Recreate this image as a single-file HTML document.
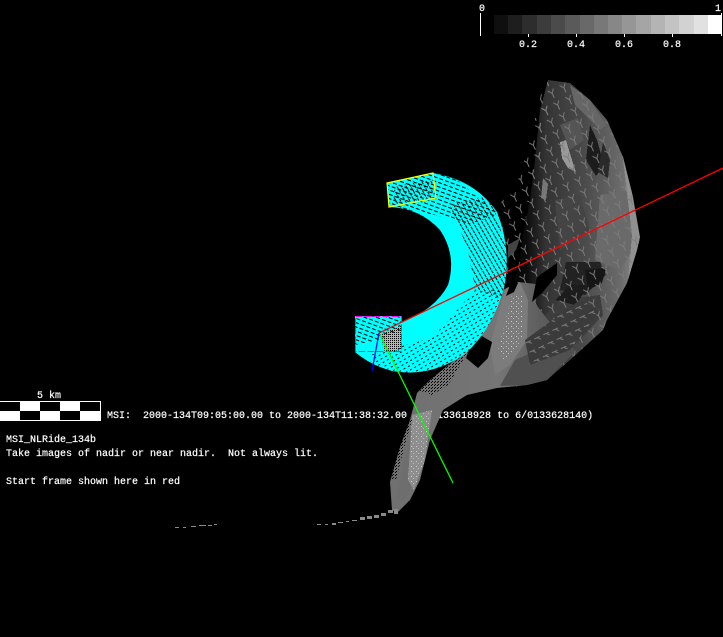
<!DOCTYPE html>
<html>
<head>
<meta charset="utf-8">
<style>
html,body{margin:0;padding:0;background:#000;width:723px;height:637px;overflow:hidden}
svg{position:absolute;left:0;top:0;display:block}
text{font-family:"Liberation Mono",monospace;font-size:10px;fill:#fff;stroke:#fff;stroke-width:.2}
</style>
</head>
<body>
<svg width="723" height="637" viewBox="0 0 723 637" xmlns="http://www.w3.org/2000/svg">
<defs>
<linearGradient id="body" gradientUnits="userSpaceOnUse" x1="505" y1="0" x2="640" y2="0">
<stop offset="0" stop-color="#000"/>
<stop offset=".16" stop-color="#0c0c0c"/>
<stop offset=".3" stop-color="#333"/>
<stop offset=".6" stop-color="#4c4c4c"/>
<stop offset=".85" stop-color="#6a6a6a"/>
<stop offset="1" stop-color="#8c8c8c"/>
</linearGradient>
<linearGradient id="low" gradientUnits="userSpaceOnUse" x1="400" y1="0" x2="600" y2="0">
<stop offset="0" stop-color="#707070"/>
<stop offset=".5" stop-color="#757575"/>
<stop offset=".72" stop-color="#5c5c5c"/>
<stop offset="1" stop-color="#444"/>
</linearGradient>
<pattern id="y" width="13" height="13" patternUnits="userSpaceOnUse" patternTransform="rotate(-25)">
<path d="M3 2l3 4 3-4M6 6v5" fill="none" stroke="#7c7c7c" stroke-width="1"/>
</pattern>
<pattern id="y2" width="10" height="10" patternUnits="userSpaceOnUse" patternTransform="rotate(-25)">
<path d="M1 3h6M4 3l3 3" fill="none" stroke="#7a7a7a" stroke-width="1"/>
</pattern>
<pattern id="dot" width="5" height="5" patternUnits="userSpaceOnUse">
<rect x="1" y="1" width="1" height="1" fill="#ccc"/><rect x="3" y="3" width="1" height="1" fill="#bbb"/>
</pattern>
<pattern id="dith" width="3" height="3" patternUnits="userSpaceOnUse">
<rect x="0" y="0" width="1" height="1" fill="#000"/><rect x="2" y="1" width="1" height="1" fill="#000"/>
</pattern>
<pattern id="c1" width="6" height="4" patternUnits="userSpaceOnUse" patternTransform="rotate(20)">
<rect x="0" y="1" width="4" height="1" fill="#000"/>
</pattern>
<pattern id="c2" width="4" height="4" patternUnits="userSpaceOnUse" patternTransform="rotate(60)">
<rect x="0" y="1" width="3" height="1" fill="#000"/>
</pattern>
<pattern id="c3" width="5" height="4" patternUnits="userSpaceOnUse" patternTransform="rotate(-30)">
<rect x="0" y="1" width="2" height="1" fill="#000"/>
</pattern>
<pattern id="c4" width="2" height="2" patternUnits="userSpaceOnUse">
<rect x="0" y="0" width="1" height="1" fill="#000"/>
</pattern>
<clipPath id="cres"><path d="M387 183L433 173Q475 180 497 212Q512 250 504 288Q492 330 465 354Q430 378 392 371Q370 365 355 352V316H401V322Q435 310 448 285Q457 255 440 230Q420 208 389 207Z"/></clipPath>
<clipPath id="upper"><path d="M552 78L570 83L590 100L607 120L623 157L633 197L640 237L637 250L627 283L607 320L603 330L570 360L547 380L527 385L497 388L470 393L520 300L505 240L500 203L520 170L533 137L542 93Z"/></clipPath>
</defs>

<!-- text under mesh -->
<text x="107" y="418" xml:space="preserve">MSI:  2000-134T09:05:00.00 to 2000-134T11:38:32.00 (6/0133618928 to 6/0133628140)</text>

<!-- asteroid: upper body -->
<path d="M548 80L570 83L590 100L607 120L623 157L633 197L640 237L637 250L627 283L607 320L603 330L570 360L547 380L527 385L505 388L505 300L518 270L522 240L530 200L535 160L540 110Z" fill="url(#body)"/>
<g clip-path="url(#upper)" shape-rendering="crispEdges">
<path d="M590 125L597 140L604 165L596 176L586 160Z" fill="#1c1c1c"/>
<path d="M603 142L610 160L608 178L598 172Z" fill="#2a2a2a"/>
<path d="M560 125L578 118L584 140L570 150Z" fill="#555"/>
<path d="M560 142L566 140L572 160L576 172L568 168L562 158Z" fill="#999"/>
<path d="M543 178L548 184L546 200L541 198Z" fill="#777"/>
<path d="M600 195L630 190L640 240L620 270L595 260Z" fill="#6a6a6a"/>
<path d="M622 150L630 180L640 240L634 270L628 280L632 235Z" fill="#909090"/>
<path d="M555 200L580 195L590 230L560 250Z" fill="#444"/>
<path d="M570 85L590 100L606 125L600 130L575 105Z" fill="#666"/>
<path d="M566 262L600 262L606 275L585 295L560 290Z" fill="#222"/>
<path d="M560 300L600 295L603 315L575 345L540 345L545 315Z" fill="#3d3d3d"/>
<path d="M585 270L606 268L602 283L588 290Z" fill="#151515"/>
<path d="M570 285L590 285L575 305L555 300Z" fill="#1c1c1c"/>
<path d="M530 345L570 345L547 380L505 388Z" fill="#5e5e5e"/>
</g>
<path d="M548 80L570 83L590 100L607 120L623 157L633 197L640 237L637 250L627 283L607 320L603 330L570 360L547 380L527 385L505 388L505 300L518 270L522 240L530 200L535 160L540 110Z" fill="url(#y)" shape-rendering="crispEdges"/>

<!-- sparse left edge -->
<path d="M542 90L550 78L548 125L538 165L528 205L520 250L510 275L498 270L502 235L500 203L515 190L530 140Z" fill="url(#y)" shape-rendering="crispEdges"/>
<path d="M508 245L520 238L516 250L508 258Z" fill="#444"/>

<!-- asteroid: lower curve -->
<path d="M503 290L518 282L545 285L534 302L548 320L575 350L547 380L527 385L497 388L467 395L443 410L430 440L420 480L410 500L397 513L392 510L390 482L400 447L410 420L417 393L430 380L463 353L480 323Z" fill="url(#low)"/>
<path d="M505 290L520 282L528 300L527 340L510 365L495 375L490 345Z" fill="#7c7c7c"/>
<path d="M512 295L522 295L522 340L505 362L498 350Z" fill="url(#dot)"/>
<path d="M515 360L560 340L575 352L547 380L527 385L500 386Z" fill="#505050"/>
<path d="M525 340L580 300L600 310L570 350L530 365Z" fill="#3b3b3b"/>
<path d="M525 340L580 300L600 310L570 350L530 365Z" fill="url(#y2)"/>
<path d="M405 500L415 480L425 440L412 435L402 470L396 500Z" fill="#6e6e6e"/>
<path d="M412 415L432 410L425 460L414 490L408 480Z" fill="#8e8e8e"/>
<path d="M412 415L432 410L425 460L414 490L408 480Z" fill="url(#dot)"/>
<path d="M396 480L404 448L412 420L405 415L396 450L390 480Z" fill="url(#dith)"/>
<path d="M418 390L460 355L468 352L448 385L432 395Z" fill="url(#dith)"/>
<!-- mid-body black holes -->
<path d="M557 263L537 277L532 302L542 293L557 275Z" fill="#000"/>
<path d="M471 345L480 335L492 342L488 358L478 368L466 358Z" fill="#000"/>
<path d="M512 280L518 283L514 292L506 296Z" fill="#000"/>

<!-- tail dashes -->
<g fill="#8a8a8a" shape-rendering="crispEdges">
<rect x="175" y="527" width="4" height="1"/><rect x="183" y="527" width="3" height="1"/><rect x="191" y="526" width="5" height="1"/><rect x="199" y="525" width="7" height="1"/><rect x="208" y="525" width="4" height="1"/><rect x="214" y="524" width="3" height="1"/>
<rect x="317" y="524" width="4" height="1"/><rect x="325" y="524" width="3" height="1"/><rect x="332" y="523" width="4" height="2"/><rect x="338" y="522" width="5" height="1"/><rect x="346" y="521" width="3" height="1"/><rect x="352" y="520" width="5" height="1"/><rect x="360" y="517" width="5" height="3"/><rect x="367" y="516" width="5" height="3"/><rect x="374" y="515" width="5" height="3"/><rect x="381" y="513" width="5" height="3"/><rect x="388" y="510" width="5" height="3"/><rect x="394" y="509" width="4" height="5"/>
</g>

<!-- crescent -->
<path d="M387 183L433 173Q475 180 497 212Q512 250 504 288Q492 330 465 354Q430 378 392 371Q370 365 355 352V316H401V322Q435 310 448 285Q457 255 440 230Q420 208 389 207Z" fill="#0ff"/>
<g clip-path="url(#cres)" shape-rendering="crispEdges">
<path d="M385 170H445L500 215L465 225L435 215L390 207Z" fill="url(#c1)"/>
<path d="M450 205L490 195L510 260L505 300L475 290L468 250Z" fill="url(#c2)"/>
<path d="M395 186L432 180L434 198L392 205Z" fill="url(#c2)"/>
<path d="M392 186L432 180L432 188L395 198Z" fill="url(#c1)"/>
<path d="M475 290L508 290L480 350L445 372L435 335Z" fill="url(#c3)"/>
<path d="M355 316H401V330L378 340L355 345Z" fill="url(#c1)"/>
<path d="M380 335L401 325V350L385 352Z" fill="url(#c4)"/>
<path d="M405 345L440 335L445 372L385 375L370 355Z" fill="url(#c3)"/>
</g>

<!-- frames -->
<path d="M387 183L433 173L436 198L389 207Z" fill="none" stroke="#ff0" stroke-width="1.200"/>
<path d="M355.500 316.500H401.500V351.500H355.500Z" fill="none" stroke="#f0f" stroke-width="1" stroke-dasharray="7 2" shape-rendering="crispEdges"/>

<!-- axes -->
<line x1="379" y1="333" x2="723" y2="168" stroke="#f00" stroke-width="1.300"/>
<line x1="379" y1="333" x2="453" y2="483" stroke="#0f0" stroke-width="1.300"/>
<line x1="379" y1="333" x2="372" y2="371" stroke="#00f" stroke-width="1.300"/>

<!-- colorbar -->
<g shape-rendering="crispEdges">
<rect x="494" y="15" width="14" height="19" fill="#0f0f0f"/><rect x="508" y="15" width="14" height="19" fill="#1e1e1e"/><rect x="522" y="15" width="15" height="19" fill="#2d2d2d"/><rect x="537" y="15" width="14" height="19" fill="#3c3c3c"/><rect x="551" y="15" width="14" height="19" fill="#4b4b4b"/><rect x="565" y="15" width="15" height="19" fill="#5a5a5a"/><rect x="580" y="15" width="14" height="19" fill="#696969"/><rect x="594" y="15" width="14" height="19" fill="#787878"/><rect x="608" y="15" width="14" height="19" fill="#878787"/><rect x="622" y="15" width="14" height="19" fill="#969696"/><rect x="636" y="15" width="15" height="19" fill="#a5a5a5"/><rect x="651" y="15" width="14" height="19" fill="#b4b4b4"/><rect x="665" y="15" width="14" height="19" fill="#c3c3c3"/><rect x="679" y="15" width="15" height="19" fill="#d2d2d2"/><rect x="694" y="15" width="14" height="19" fill="#e1e1e1"/><rect x="708" y="15" width="14" height="19" fill="#fff"/>
<rect x="480" y="13" width="1" height="23" fill="#fff"/><rect x="721" y="13" width="1" height="23" fill="#fff"/>
<rect x="528" y="34" width="1" height="3" fill="#fff"/><rect x="576" y="34" width="1" height="3" fill="#fff"/><rect x="624" y="34" width="1" height="3" fill="#fff"/><rect x="672" y="34" width="1" height="3" fill="#fff"/>
</g>
<text x="479" y="11">0</text><text x="715" y="11">1</text>
<text x="528" y="47" text-anchor="middle">0.2</text><text x="576" y="47" text-anchor="middle">0.4</text><text x="624" y="47" text-anchor="middle">0.6</text><text x="672" y="47" text-anchor="middle">0.8</text>

<!-- scale bar -->
<g shape-rendering="crispEdges">
<rect x="0" y="401" width="101" height="20" fill="#fff"/>
<rect x="0" y="402" width="20" height="9" fill="#000"/><rect x="40" y="402" width="20" height="9" fill="#000"/><rect x="80" y="402" width="20" height="9" fill="#000"/>
<rect x="20" y="411" width="20" height="9" fill="#000"/><rect x="60" y="411" width="20" height="9" fill="#000"/>
</g>
<text x="37" y="398" xml:space="preserve">5 km</text>
<text x="6" y="442">MSI_NLRide_134b</text>
<text x="6" y="456" xml:space="preserve">Take images of nadir or near nadir.  Not always lit.</text>
<text x="6" y="484">Start frame shown here in red</text>
</svg>
</body>
</html>
